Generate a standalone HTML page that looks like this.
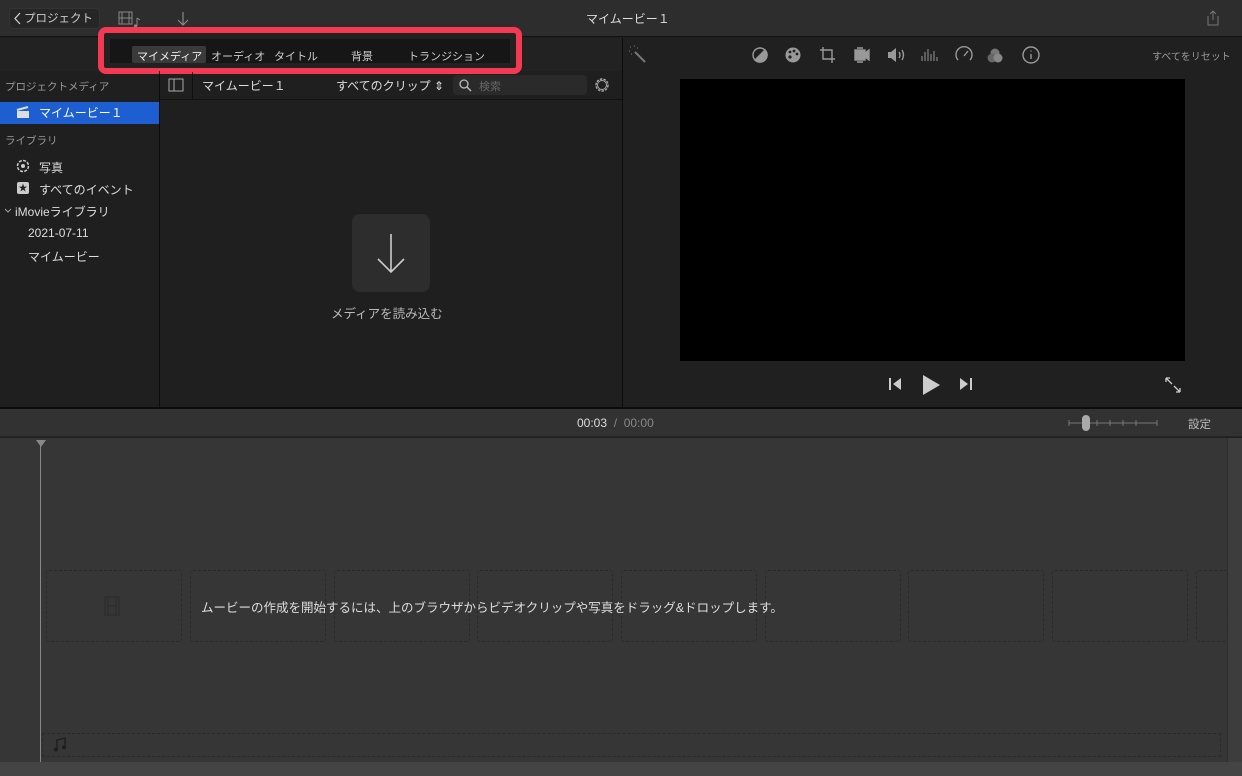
<!DOCTYPE html>
<html><head><meta charset="utf-8"><style>
*{margin:0;padding:0;box-sizing:border-box}
body{width:1242px;height:776px;overflow:hidden;background:#1f1f1f;font-family:"Liberation Sans","Noto Sans CJK JP",sans-serif;color:#ddd;position:relative}
.a{position:absolute}
.t{position:absolute;white-space:nowrap}
.slot{position:absolute;top:570px;height:72px;width:136px;border:1px dashed #2a2a2a;border-radius:3px}
</style></head><body>
<!-- top bar -->
<div class="a" style="left:0;top:0;width:1242px;height:37px;background:#2d2d2d;border-bottom:1px solid #111"></div>
<div class="a" style="left:9px;top:8px;width:91px;height:21px;background:#262626;border:1px solid #333;border-radius:4px"></div>
<svg class="a" style="left:14px;top:12px" width="8" height="13"><path d="M6 1L1 6.5L6 12" stroke="#ccc" fill="none" stroke-width="1.3"/></svg>
<div class="t" style="left:24px;top:10px;font-size:11.5px;color:#ccc">プロジェクト</div>
<svg class="a" style="left:118px;top:10px" width="28" height="18"><rect x="1" y="2" width="13" height="12" fill="none" stroke="#888"/><line x1="4" y1="2" x2="4" y2="14" stroke="#888"/><line x1="11" y1="2" x2="11" y2="14" stroke="#888"/><line x1="1" y1="8" x2="14" y2="8" stroke="#888"/><path d="M19 8V16" stroke="#888"/><circle cx="17.5" cy="16" r="1.6" fill="#888"/><path d="M19 8L22 10" stroke="#888"/></svg>
<svg class="a" style="left:176px;top:11px" width="14" height="16"><path d="M7 1V14M2 9L7 14L12 9" stroke="#888" fill="none" stroke-width="1.2"/></svg>
<div class="t" style="left:586px;top:10px;font-size:12px;color:#ddd">マイムービー１</div>
<svg class="a" style="left:1205px;top:9px" width="16" height="18"><path d="M3 7V16H13V7M8 2V11M5 5L8 2L11 5" stroke="#777" fill="none"/></svg>
<!-- tab bar -->
<div class="a" style="left:0;top:38px;width:622px;height:33px;background:#222"></div>
<div class="a" style="left:98px;top:27px;width:424px;height:47px;border:6px solid #f43a52;border-radius:8px"></div>
<div class="a" style="left:104px;top:33px;width:412px;height:35px;background:#222;border-radius:3px"></div>
<div class="a" style="left:110px;top:39px;width:400px;height:24px;background:#161616"></div>
<div class="a" style="left:132px;top:46px;width:74px;height:17px;background:#3a3a3a;border-radius:2px"></div>
<div class="t" style="left:137px;top:48px;font-size:11px;color:#eee">マイメディア</div>
<div class="t" style="left:211px;top:48px;font-size:11px;color:#ccc">オーディオ</div>
<div class="t" style="left:274px;top:48px;font-size:11px;color:#ccc">タイトル</div>
<div class="t" style="left:351px;top:48px;font-size:11px;color:#ccc">背景</div>
<div class="t" style="left:408px;top:48px;font-size:11px;color:#ccc">トランジション</div>
<!-- sidebar -->
<div class="a" style="left:159px;top:71px;width:1px;height:337px;background:#0c0c0c"></div>
<div class="t" style="left:5px;top:79px;font-size:10.5px;color:#999">プロジェクトメディア</div>
<div class="a" style="left:0;top:102px;width:159px;height:22px;background:#1d5fd0"></div>
<svg class="a" style="left:16px;top:106px" width="14" height="13"><rect x="1" y="5" width="12" height="7" fill="#ddd"/><path d="M1 4L12 1" stroke="#ddd" stroke-width="2"/></svg>
<div class="t" style="left:39px;top:104px;font-size:12px;color:#fff">マイムービー１</div>
<div class="t" style="left:5px;top:133px;font-size:10.5px;color:#999">ライブラリ</div>
<svg class="a" style="left:16px;top:159px" width="14" height="14"><circle cx="7" cy="7" r="5.5" fill="none" stroke="#ccc" stroke-width="1.5" stroke-dasharray="3 1.3"/><circle cx="7" cy="7" r="2" fill="#ccc"/></svg>
<div class="t" style="left:39px;top:159px;font-size:12px;color:#ddd">写真</div>
<div class="a" style="left:17px;top:182px;width:12px;height:12px;background:#ccc;border-radius:2px;color:#222;font-size:9px;text-align:center;line-height:12px">★</div>
<div class="t" style="left:39px;top:181px;font-size:12px;color:#ddd">すべてのイベント</div>
<svg class="a" style="left:4px;top:208px" width="8" height="6"><path d="M1 1L4 4L7 1" stroke="#999" fill="none"/></svg>
<div class="t" style="left:15px;top:203px;font-size:12px;color:#ddd">iMovieライブラリ</div>
<div class="t" style="left:28px;top:226px;font-size:12px;color:#ddd">2021-07-11</div>
<div class="t" style="left:28px;top:248px;font-size:12px;color:#ddd">マイムービー</div>
<!-- browser header -->
<div class="a" style="left:160px;top:99px;width:462px;height:1px;background:#111"></div>
<div class="a" style="left:192px;top:72px;width:1px;height:27px;background:#111"></div>
<svg class="a" style="left:168px;top:78px" width="16" height="14"><rect x="1" y="1" width="14" height="12" fill="none" stroke="#aaa"/><line x1="6" y1="1" x2="6" y2="13" stroke="#aaa"/></svg>
<div class="t" style="left:202px;top:77px;font-size:12px;color:#ddd">マイムービー１</div>
<div class="t" style="left:336px;top:77px;font-size:12px;color:#ddd">すべてのクリップ ⇕</div>
<div class="a" style="left:453px;top:75px;width:134px;height:20px;background:#2a2a2a;border-radius:4px"></div>
<svg class="a" style="left:459px;top:79px" width="13" height="13"><circle cx="5" cy="5" r="4" stroke="#bbb" fill="none" stroke-width="1.3"/><path d="M8 8L12 12" stroke="#bbb" stroke-width="1.4"/></svg>
<div class="t" style="left:479px;top:78px;font-size:11px;color:#666">検索</div>
<svg class="a" style="left:593px;top:76px" width="18" height="18"><circle cx="9" cy="9" r="6" stroke="#aaa" fill="none" stroke-width="1.4" stroke-dasharray="2.5 1.2"/><circle cx="9" cy="9" r="4.5" stroke="#aaa" fill="none" stroke-width="1"/></svg>
<div class="a" style="left:352px;top:214px;width:78px;height:78px;background:#2d2d2d;border-radius:8px"></div>
<svg class="a" style="left:374px;top:232px" width="34" height="44"><path d="M17 2V40M4 27L17 40L30 27" stroke="#ccc" fill="none" stroke-width="1.6"/></svg>
<div class="t" style="left:331px;top:303px;font-size:12.5px;color:#bbb">メディアを読み込む</div>
<!-- viewer -->
<div class="a" style="left:622px;top:38px;width:1px;height:370px;background:#0c0c0c"></div>
<div class="a" style="left:623px;top:38px;width:619px;height:370px;background:#202020"></div>
<svg class="a" style="left:627px;top:44px" width="20" height="20"><path d="M8 8L18 18" stroke="#777" stroke-width="2"/><path d="M3 3h1M7 2h1M2 7h1M10 4h1M4 10h1" stroke="#777"/></svg>
<svg class="a" style="left:748px;top:44px" width="295" height="22" fill="none" stroke="#999" stroke-width="1.4">
<circle cx="12" cy="11" r="7"/><path d="M17 6A7 7 0 0 1 7 16Z" fill="#999"/>
<circle cx="45" cy="11" r="7.5" fill="#999" stroke="none"/><circle cx="42" cy="8" r="1.4" fill="#202020" stroke="none"/><circle cx="46" cy="7" r="1.4" fill="#202020" stroke="none"/><circle cx="49" cy="10" r="1.4" fill="#202020" stroke="none"/><circle cx="42" cy="13" r="1.6" fill="#202020" stroke="none"/>
<path d="M75 3V15H87M72 6H84V19"/>
<rect x="107" y="6" width="10" height="10" fill="#999"/><path d="M117 9L121 6V16L117 13Z" fill="#999"/><path d="M109 4h6M109 18h6"/>
<path d="M140 8H143L148 4V18L143 14H140Z" fill="#999" stroke="none"/><path d="M151 8Q153 11 151 14M154 6Q157 11 154 16"/>
<path d="M174 17V12M177 17V8M180 17V5M183 17V10M186 17V7M189 17V13" stroke-width="1"/>
<path d="M210 16A8 8 0 1 1 222 16"/><path d="M216 12L220 7"/>
<circle cx="247" cy="9" r="4.5" fill="#777" stroke="none"/><circle cx="244" cy="14" r="4.5" fill="#666" stroke="none"/><circle cx="250" cy="14" r="4.5" fill="#888" stroke="none"/>
<circle cx="283" cy="11" r="8"/><path d="M283 10V15M283 6.5V7.5"/>
</svg>
<div class="t" style="left:1152px;top:48px;font-size:10px;color:#999">すべてをリセット</div>
<div class="a" style="left:680px;top:79px;width:505px;height:282px;background:#000"></div>
<svg class="a" style="left:888px;top:374px" width="90" height="22"><path d="M2 4V16" stroke="#ccc" stroke-width="2"/><path d="M13 4L5 10L13 16Z" fill="#ccc"/><path d="M35 1L52 11L35 21Z" fill="#ccc"/><path d="M72 4L80 10L72 16Z" fill="#ccc"/><path d="M83 4V16" stroke="#ccc" stroke-width="2"/></svg>
<svg class="a" style="left:1164px;top:376px" width="18" height="18"><path d="M2 2L8 8M2 2V6M2 2H6M16 16L10 10M16 16V12M16 16H12" stroke="#ccc" fill="none" stroke-width="1.3"/></svg>
<!-- timeline header -->
<div class="a" style="left:0;top:407px;width:1242px;height:2px;background:#0c0c0c"></div>
<div class="a" style="left:0;top:409px;width:1242px;height:28px;background:#323232;border-bottom:1px solid #262626"></div>
<div class="t" style="left:577px;top:416px;font-size:12px;color:#ddd">00:03 <span style="color:#888">&nbsp;/ &nbsp;00:00</span></div>
<svg class="a" style="left:1067px;top:414px" width="94" height="18"><path d="M2 9H90" stroke="#777"/><path d="M2 6V12M30 6V12M43 6V12M56 6V12M69 6V12M90 6V12" stroke="#777"/><rect x="15" y="1" width="8" height="16" rx="4" fill="#aaa"/></svg>
<div class="t" style="left:1188px;top:416px;font-size:11.5px;color:#bbb">設定</div>
<!-- timeline -->
<div class="a" style="left:0;top:438px;width:1242px;height:324px;background:#363636"></div>
<div class="a" style="left:1227px;top:438px;width:15px;height:324px;background:#3d3d3d;border-left:1px solid #2e2e2e"></div>
<div class="a" style="left:40px;top:440px;width:1px;height:322px;background:#888"></div>
<div class="a" style="left:36px;top:440px;width:0;height:0;border-left:5px solid transparent;border-right:5px solid transparent;border-top:7px solid #888"></div>
<div class="slot" style="left:46px"></div><div class="slot" style="left:190px"></div><div class="slot" style="left:334px"></div><div class="slot" style="left:477px"></div><div class="slot" style="left:621px"></div><div class="slot" style="left:765px"></div><div class="slot" style="left:908px"></div><div class="slot" style="left:1052px"></div><div class="slot" style="left:1196px;width:32px"></div>
<svg class="a" style="left:104px;top:596px" width="18" height="20"><rect x="1" y="1" width="14" height="18" fill="none" stroke="#2a2a2a"/><line x1="4" y1="1" x2="4" y2="19" stroke="#2a2a2a"/><line x1="12" y1="1" x2="12" y2="19" stroke="#2a2a2a"/><line x1="4" y1="10" x2="12" y2="10" stroke="#2a2a2a"/></svg>
<div class="t" style="left:201px;top:597px;font-size:12.5px;color:#ddd">ムービーの作成を開始するには、上のブラウザからビデオクリップや写真をドラッグ&amp;ドロップします。</div>
<div class="a" style="left:42px;top:733px;width:1179px;height:24px;border:1px dashed #2a2a2a"></div>
<svg class="a" style="left:53px;top:737px" width="14" height="16"><path d="M4 12V3L12 1V10" stroke="#1e1e1e" fill="none" stroke-width="1.4"/><circle cx="3" cy="12.5" r="2" fill="#1e1e1e"/><circle cx="11" cy="10.5" r="2" fill="#1e1e1e"/></svg>
<div class="a" style="left:0;top:762px;width:1242px;height:14px;background:#444"></div>
</body></html>
